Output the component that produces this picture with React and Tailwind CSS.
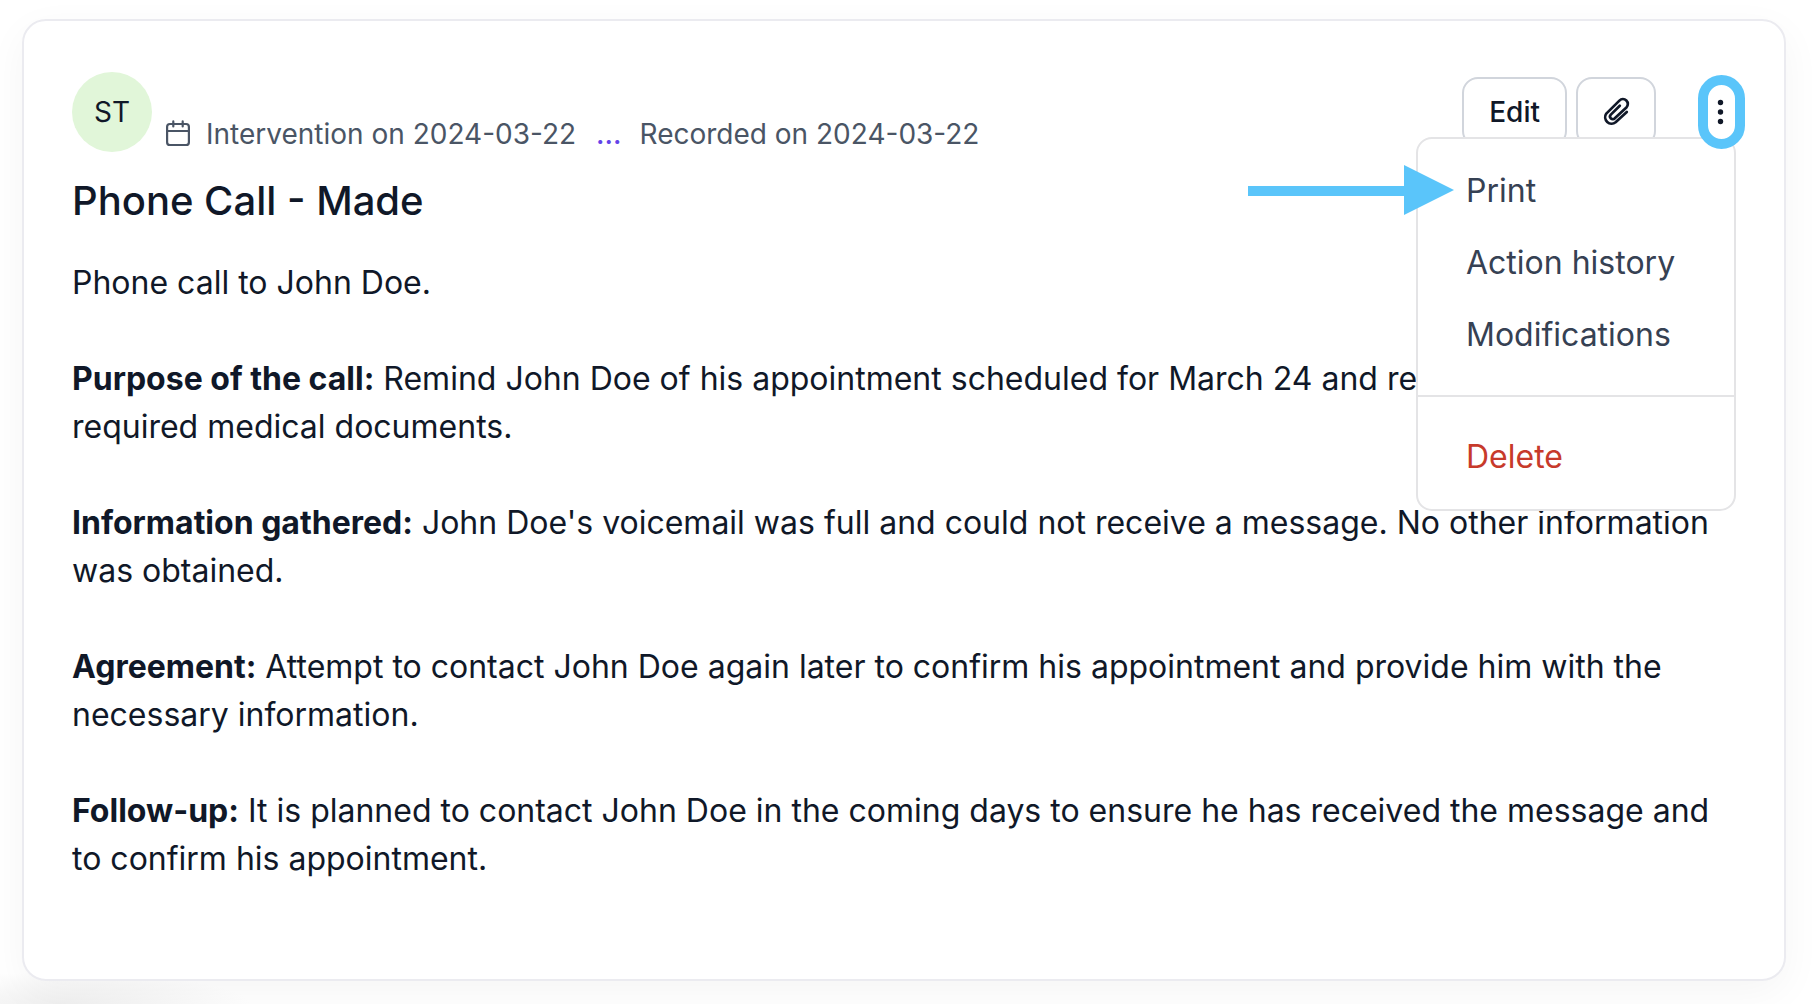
const SECTIONS = [
  {
    label: 'Purpose of the call:',
    text: 'Remind John Doe of his appointment scheduled for March 24 and remind him of the required medical documents.',
  },
  {
    label: 'Information gathered:',
    text: "John Doe's voicemail was full and could not receive a message. No other information was obtained.",
  },
  {
    label: 'Agreement:',
    text: 'Attempt to contact John Doe again later to confirm his appointment and provide him with the necessary information.',
  },
  {
    label: 'Follow-up:',
    text: 'It is planned to contact John Doe in the coming days to ensure he has received the message and to confirm his appointment.',
  },
]

const MENU_ITEMS = ['Print', 'Action history', 'Modifications']

function CalendarIcon() {
  return (
    <svg className="h-7 w-6 shrink-0" viewBox="0 0 24 28" fill="none" stroke="currentColor" strokeWidth="2.2" strokeLinecap="round" aria-hidden>
      <rect x="1.1" y="4" width="21.8" height="21" rx="2.8" />
      <path d="M1 11h22M7.3 1.4v5M16.7 1.4v5" />
    </svg>
  )
}

function ClipIcon() {
  return (
    <svg className="h-8 w-8" viewBox="0 0 32 32" fill="none" stroke="currentColor" strokeWidth="2.7" strokeLinecap="round" strokeLinejoin="round" aria-hidden>
      <path d="M26.8 15.9 15.6 26.2a6.4 6.4 0 0 1-9.3-8.6L19.4 4.6a4.9 4.9 0 0 1 7 6.9L14.8 22.3a2.7 2.7 0 0 1-4-3.7l9-8.9" />
    </svg>
  )
}

function DotsIcon() {
  return (
    <svg className="h-7 w-7 shrink-0" viewBox="0 0 28 28" fill="currentColor" aria-hidden>
      <circle cx="12.5" cy="4.5" r="2.7" />
      <circle cx="12.5" cy="14" r="2.7" />
      <circle cx="12.5" cy="23.5" r="2.7" />
    </svg>
  )
}

function ActionMenu() {
  return (
    <div role="menu" className="absolute right-0 top-[65px] z-10 w-80 rounded-2xl border-2 border-[#e4e4e6] bg-white text-[32px] leading-12">
      <div className="pt-4 pb-6">
        {MENU_ITEMS.map((item) => (
          <button key={item} type="button" role="menuitem" className="block w-full px-12 py-3 text-left text-gray-700">
            {item}
          </button>
        ))}
      </div>
      <div className="border-t-2 border-[#e4e4e6] pt-6 pb-4">
        <button type="button" role="menuitem" className="block w-full px-12 py-3 text-left text-[#c73a2b]">
          Delete
        </button>
      </div>
      {/* Arrow pointing at the first item */}
      <svg className="absolute top-[26px] right-70 h-[50px] w-[206px]" viewBox="0 0 206 50" fill="#5ac5fa" aria-hidden>
        <path d="M0 21h156V0l50 25-50 25V31H0z" />
      </svg>
    </div>
  )
}

export default function App() {
  return (
    <div className="min-h-screen overflow-hidden bg-white bg-[radial-gradient(ellipse_190px_32px_at_60px_100%,#f0f0f0,transparent)] px-7 pt-[19px] pb-[23px] pl-[22px] font-['Inter',sans-serif] text-gray-900">
      <article className="rounded-3xl border-2 border-[#ebebf0] bg-white px-12 pt-[51px] pb-24 shadow-[0_12px_40px_rgba(0,0,0,0.045)]">
        <header className="relative flex items-center">
          <div className="flex size-20 shrink-0 items-center justify-center rounded-full bg-[#e1f6d9] text-[28px]">ST</div>
          <div className="ml-3.5 flex items-center self-end text-[28px] leading-9 text-gray-600">
            <CalendarIcon />
            <span className="ml-4">Intervention on 2024-03-22</span>
            <a href="#details" className="mr-[18px] ml-5 font-medium text-[#6344e8]">...</a>
            <span>Recorded on 2024-03-22</span>
          </div>
          <div className="-mr-[9px] ml-auto flex items-center text-[28px] font-medium">
            <button type="button" className="h-[70px] rounded-2xl border-2 border-gray-300 px-[25px]">Edit</button>
            <button type="button" aria-label="Attachments" className="ml-[9px] flex h-[70px] w-20 items-center justify-center rounded-2xl border-2 border-gray-300">
              <ClipIcon />
            </button>
            <button type="button" aria-label="More actions" className="relative z-20 ml-[42px] flex h-[74px] w-[47px] items-center justify-center rounded-3xl border-10 border-[#5ac5fa] bg-white">
              <DotsIcon />
            </button>
          </div>
          <ActionMenu />
        </header>
        <h1 className="mt-[25px] text-[40px] leading-12 font-medium">Phone Call - Made</h1>
        <div className="mt-[34px] space-y-12 text-[32px] leading-12">
          <p>Phone call to John Doe.</p>
          {SECTIONS.map(({ label, text }) => (
            <p key={label}>
              <strong className="font-bold">{label}</strong> {text}
            </p>
          ))}
        </div>
      </article>
    </div>
  )
}
